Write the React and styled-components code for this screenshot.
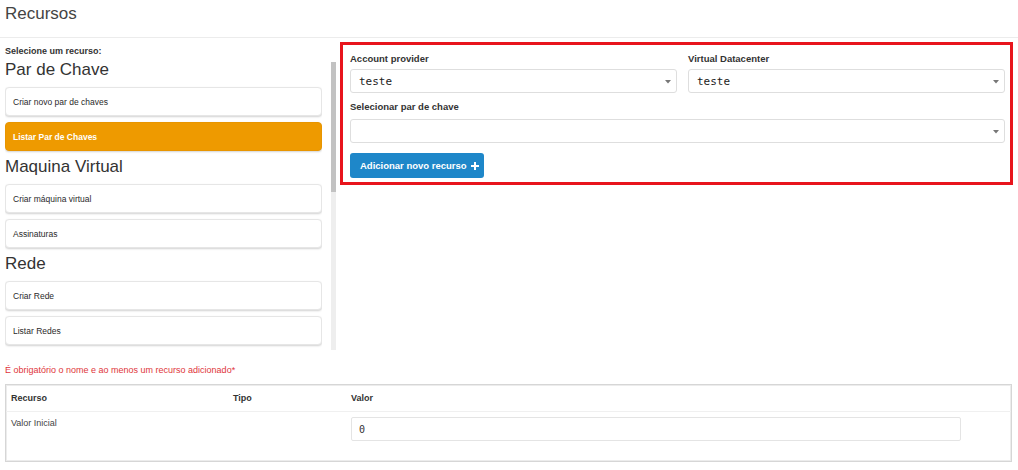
import React from "react";
import styled, { createGlobalStyle } from "styled-components";

const GlobalStyle = createGlobalStyle`
  html, body {
    margin: 0;
    padding: 0;
    background: #ffffff;
    font-family: "Liberation Sans", Arial, sans-serif;
    color: #333333;
  }
  * { box-sizing: border-box; }
`;

const SECTIONS = [
  { title: "Par de Chave", items: ["Criar novo par de chaves", "Listar Par de Chaves"] },
  { title: "Maquina Virtual", items: ["Criar máquina virtual", "Assinaturas"] },
  { title: "Rede", items: ["Criar Rede", "Listar Redes"] },
];

const ACTIVE = "Listar Par de Chaves";

function Caret() {
  return (
    <CaretIcon width="6" height="4" viewBox="0 0 6 4">
      <path d="M0 0 L6 0 L3 3.5 Z" fill="#777" />
    </CaretIcon>
  );
}

function Select({ value }) {
  return (
    <SelectBox>
      <SelectValue>{value}</SelectValue>
      <Caret />
    </SelectBox>
  );
}

export default function App() {
  return (
    <Page>
      <GlobalStyle />
      <Header>Recursos</Header>
      <Main>
        <Sidebar>
          <SidebarLabel>Selecione um recurso:</SidebarLabel>
          <ScrollArea>
            <ScrollContent>
              {SECTIONS.map((s) => (
                <Section key={s.title}>
                  <SectionTitle>{s.title}</SectionTitle>
                  {s.items.map((it) => (
                    <Item key={it} $active={it === ACTIVE}>
                      {it}
                    </Item>
                  ))}
                </Section>
              ))}
            </ScrollContent>
            <ScrollTrack>
              <ScrollThumb />
            </ScrollTrack>
          </ScrollArea>
        </Sidebar>
        <FormBox>
          <TwoCols>
            <Field>
              <Label>Account provider</Label>
              <Select value="teste" />
            </Field>
            <Field>
              <Label>Virtual Datacenter</Label>
              <Select value="teste" />
            </Field>
          </TwoCols>
          <Field $top={8}>
            <Label $gap={6}>Selecionar par de chave</Label>
            <Select value="" />
          </Field>
          <AddButton>
            Adicionar novo recurso
            <PlusIcon width="8" height="8" viewBox="0 0 8 8">
              <path d="M3 0h2v3h3v2H5v3H3V5H0V3h3z" fill="#fff" />
            </PlusIcon>
          </AddButton>
        </FormBox>
      </Main>
      <ErrorText>É obrigatório o nome e ao menos um recurso adicionado*</ErrorText>
      <Table>
        <HeadRow>
          <HeadCell>Recurso</HeadCell>
          <HeadCell>Tipo</HeadCell>
          <HeadCell>Valor</HeadCell>
        </HeadRow>
        <BodyRow>
          <Cell>Valor Inicial</Cell>
          <Cell></Cell>
          <Cell>
            <ValueInput>0</ValueInput>
          </Cell>
        </BodyRow>
      </Table>
    </Page>
  );
}

const Page = styled.div`
  width: 1018px;
  height: 470px;
  overflow: hidden;
`;

const Header = styled.div`
  height: 38px;
  padding: 4px 0 0 5px;
  font-size: 17px;
  color: #444;
  border-bottom: 1px solid #ececec;
`;

const Main = styled.div`
  display: flex;
  gap: 4px;
  align-items: flex-start;
`;

const Sidebar = styled.div`
  width: 336px;
  display: flex;
  flex-direction: column;
`;

const SidebarLabel = styled.div`
  font-size: 9px;
  font-weight: bold;
  padding: 7px 0 0 5px;
  height: 22px;
  line-height: 12px;
  color: #333;
`;

const ScrollArea = styled.div`
  height: 290px;
  display: flex;
  gap: 9px;
  padding-left: 5px;
`;

const ScrollContent = styled.div`
  flex: 1;
  overflow: hidden;
`;

const ScrollTrack = styled.div`
  width: 5px;
  margin-top: 2px;
  background: #eeeeee;
`;

const ScrollThumb = styled.div`
  height: 130px;
  background: #c2c2c2;
`;

const Section = styled.div`
  display: flex;
  flex-direction: column;
`;

const SectionTitle = styled.div`
  font-size: 17px;
  line-height: 20px;
  height: 20px;
  color: #333;
  margin-bottom: 7px;
`;

const Item = styled.div`
  height: 29px;
  margin-bottom: 6px;
  display: flex;
  align-items: center;
  padding-left: 7px;
  border-radius: 4px;
  font-size: 8.5px;
  border: 1px solid ${(p) => (p.$active ? "#e89500" : "#e6e6e6")};
  background: ${(p) => (p.$active ? "#ee9a00" : "#ffffff")};
  color: ${(p) => (p.$active ? "#ffffff" : "#2a2a2a")};
  font-weight: ${(p) => (p.$active ? "bold" : "normal")};
  box-shadow: 0 1px 2px rgba(0, 0, 0, 0.18);
`;

const FormBox = styled.div`
  margin-top: 4px;
  width: 673px;
  height: 143px;
  border: 3px solid #e8141c;
  padding: 8px 5px 4px 7px;
  display: flex;
  flex-direction: column;
`;

const TwoCols = styled.div`
  display: grid;
  grid-template-columns: 327px 317px;
  column-gap: 11px;
`;

const Field = styled.div`
  display: flex;
  flex-direction: column;
  margin-top: ${(p) => p.$top || 0}px;
`;

const Label = styled.div`
  font-size: 9.5px;
  font-weight: bold;
  line-height: 12px;
  margin-bottom: ${(p) => p.$gap || 4}px;
  color: #333;
`;

const SelectBox = styled.div`
  height: 24px;
  border: 1px solid #dedede;
  border-radius: 3px;
  background: #fff;
  display: flex;
  align-items: center;
  justify-content: space-between;
  padding: 1px 5px 0 8px;
`;

const SelectValue = styled.span`
  font-family: "DejaVu Sans Mono", "Liberation Mono", monospace;
  font-size: 11px;
  color: #222;
`;

const CaretIcon = styled.svg`
  display: block;
`;

const AddButton = styled.div`
  margin-top: 10px;
  width: 134px;
  height: 26px;
  border-radius: 3px;
  background: #1e87c9;
  color: #fff;
  font-size: 9.5px;
  font-weight: bold;
  display: flex;
  align-items: center;
  padding-left: 10px;
  gap: 4px;
`;

const PlusIcon = styled.svg`
  display: block;
`;

const ErrorText = styled.div`
  margin-top: 14px;
  padding-left: 5px;
  font-size: 9px;
  line-height: 12px;
  color: #e0353b;
`;

const Table = styled.div`
  margin: 8px 0 0 5px;
  width: 1007px;
  border: 1px solid #d6d6d6;
  box-shadow: inset 0 0 0 1px #ececec;
`;

const HeadRow = styled.div`
  display: grid;
  grid-template-columns: 222px 118px 1fr;
  height: 27px;
  align-items: center;
  padding-left: 5px;
  border-bottom: 1px solid #f0f0f0;
`;

const HeadCell = styled.div`
  font-size: 9px;
  font-weight: bold;
  color: #333;
`;

const BodyRow = styled.div`
  display: grid;
  grid-template-columns: 222px 118px 1fr;
  height: 49px;
  padding: 5px 0 0 5px;
  align-items: start;
`;

const Cell = styled.div`
  font-size: 9px;
  color: #444;
  padding-top: 1px;
`;

const ValueInput = styled.div`
  margin-top: -1px;
  width: 610px;
  height: 24px;
  border: 1px solid #e4e4e4;
  border-radius: 2px;
  display: flex;
  align-items: center;
  padding-left: 7px;
  font-family: "DejaVu Sans Mono", "Liberation Mono", monospace;
  font-size: 10px;
  color: #333;
`;
